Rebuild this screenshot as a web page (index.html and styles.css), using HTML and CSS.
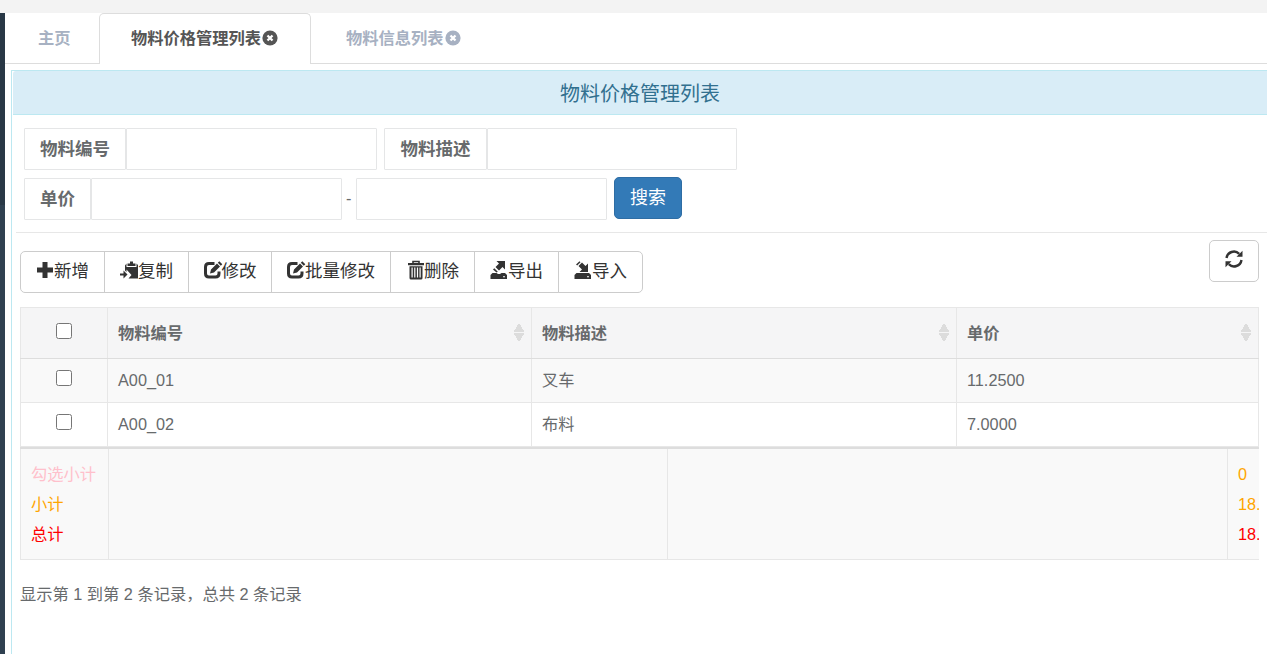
FILE: index.html
```html
<!DOCTYPE html>
<html lang="zh-CN">

<head>
    <meta charset="UTF-8" />
    <title>物料价格管理列表</title>
    <link rel="stylesheet" href="styles.css">
</head>

<body>
    <div class="topbar"></div>
    <div class="layout">
        <div class="sidebar"></div>
        <div class="main">
            <!-- Tabs -->
            <div class="tabs">
                <div class="tab home">主页</div>
                <div class="tab active">物料价格管理列表<svg class="close" viewBox="0 0 16 16"><circle cx="8" cy="8" r="7.600" fill="currentColor" /><path d="M5.500 5.500l5 5M10.500 5.500l-5 5" stroke="#fff" stroke-width="2.300" /></svg></div>
                <div class="tab">物料信息列表<svg class="close" viewBox="0 0 16 16"><circle cx="8" cy="8" r="7.600" fill="currentColor" /><path d="M5.500 5.500l5 5M10.500 5.500l-5 5" stroke="#fff" stroke-width="2.300" /></svg></div>
            </div>

            <div class="panel">
                <div class="panel-heading">物料价格管理列表</div>

                <!-- Search form -->
                <div class="search">
                    <div class="search-row">
                        <div class="group">
                            <label class="addon">物料编号</label>
                            <input class="field" type="text">
                        </div>
                        <div class="group">
                            <label class="addon addon-desc">物料描述</label>
                            <input class="field field-desc" type="text">
                        </div>
                    </div>
                    <div class="search-row">
                        <div class="group">
                            <label class="addon addon-price">单价</label>
                            <input class="field" type="text">
                        </div>
                        <span class="dash">-</span>
                        <input class="field" type="text">
                        <button class="btn-search">搜索</button>
                    </div>
                </div>

                <div class="content">
                    <!-- Toolbar -->
                    <div class="toolbar">
                        <div class="btn-group">
                            <button class="btn"><svg class="icon" viewBox="0 0 18 18"><path d="M6.500 1h5v5.500H17v5h-5.500V17h-5v-5.500H1v-5h5.500z" /></svg>新增</button>
                            <button class="btn"><svg class="icon" viewBox="0 0 18 18"><path d="M10 .5h3v2h2.500V5h-8V2.500H10zM5 4.500l1.500-2V6h10V2.500L18 4v13.500H8.500l3-3.500L6.500 8.500V11L5 9.500z" /><path d="M0 12.500h3.500V9.500l4 4-4 4V14.500H0z" /></svg>复制</button>
                            <button class="btn btn-edit"><svg class="icon" viewBox="0 0 18 18"><path d="M10.500 2.500H5Q1.500 2.500 1.500 6v6.500Q1.500 16 5 16h6.500q3.500 0 3.500-3.500V10.500" fill="none" stroke="#333" stroke-width="3" /><path d="M6 12.500l1-4L13 2.500l3 3-6 6zM13.800 1.700L15.300.3l3 3-1.500 1.400z" /></svg>修改</button>
                            <button class="btn btn-batch"><svg class="icon" viewBox="0 0 18 18"><path d="M10.500 2.500H5Q1.500 2.500 1.500 6v6.500Q1.500 16 5 16h6.500q3.500 0 3.500-3.500V10.500" fill="none" stroke="#333" stroke-width="3" /><path d="M6 12.500l1-4L13 2.500l3 3-6 6zM13.800 1.700L15.300.3l3 3-1.500 1.400z" /></svg>批量修改</button>
                            <button class="btn"><svg class="icon trash" viewBox="0 0 18 20"><path d="M6 3V1.500h6V3" fill="none" stroke="#333" stroke-width="1.600" /><path fill-rule="evenodd" d="M1 3h16v2.200H1zM2.500 6.200h13V18q0 1.500-1.500 1.500H4q-1.500 0-1.500-1.500zM4.500 7.500v10h1.200v-10zM7.200 7.500v10h1.200v-10zM9.900 7.500v10h1.200v-10zM12.500 7.500v10h1.200v-10z" /></svg>删除</button>
                            <button class="btn"><svg class="icon" viewBox="0 0 18 18"><path fill-rule="evenodd" d="M2.500 12h4l1.500 1h2l1.500-1H15l2 2v4H.5v-4zM13 15.300v1h2v-1z" /><path d="M6.500 0H15v8.500l-2.500-2.500L9 9.500 5.500 6 9 2.500z" /><path d="M4.300 7.200l3.500 3.500-1.300.8L3 8.500z" /></svg>导出</button>
                            <button class="btn"><svg class="icon" viewBox="0 0 18 18"><path fill-rule="evenodd" d="M2.500 12h12.500l2 2v4H.5v-4zM13 15.300v1h2v-1z" /><path d="M14 2.500V11H5.500L8 8.500 4.500 5 8 1.500 11.500 5z" /><path d="M2 3.500L5.500.3l1 1L3.200 4.600z" /></svg>导入</button>
                        </div>
                        <button class="btn btn-refresh"><svg class="icon" viewBox="0 0 18 18"><path d="M1.500 8a7.500 7.500 0 0 1 12.700-4.200M16.500 10a7.500 7.500 0 0 1-12.700 4.200" fill="none" stroke="#333" stroke-width="2.400" /><path d="M17.500.8v6h-6zM.5 17.200v-6h6z" /></svg></button>
                    </div>

                    <!-- Data table -->
                    <table class="table">
                        <thead>
                            <tr>
                                <th class="check"><input type="checkbox"></th>
                                <th class="col"><div class="th"><span>物料编号</span><span class="sort"></span></div></th>
                                <th class="col-desc"><div class="th"><span>物料描述</span><span class="sort"></span></div></th>
                                <th><div class="th"><span>单价</span><span class="sort"></span></div></th>
                            </tr>
                        </thead>
                        <tbody>
                            <tr>
                                <td class="check"><input type="checkbox"></td>
                                <td>A00_01</td>
                                <td class="desc">叉车</td>
                                <td>11.2500</td>
                            </tr>
                            <tr>
                                <td class="check"><input type="checkbox"></td>
                                <td>A00_02</td>
                                <td class="desc">布料</td>
                                <td>7.0000</td>
                            </tr>
                        </tbody>
                    </table>

                    <!-- Totals -->
                    <div class="totals">
                        <div class="sum sum-names">
                            <p class="pink">勾选小计</p>
                            <p class="orange">小计</p>
                            <p class="red">总计</p>
                        </div>
                        <div class="sum sum-wide"></div>
                        <div class="sum sum-last"></div>
                        <div class="sum sum-values">
                            <p class="orange">0</p>
                            <p class="orange">18.</p>
                            <p class="red">18.</p>
                        </div>
                    </div>

                    <div class="info">显示第 1 到第 2 条记录，总共 2 条记录</div>
                </div>
            </div>
        </div>
    </div>
</body>

</html>
```
FILE: styles.css
```css
* {
    box-sizing: border-box;
}

body {
    margin: 0;
    height: 654px;
    overflow: hidden;
    font-family: "Liberation Sans", "Noto Sans CJK SC", sans-serif;
    font-size: 16.25px;
    color: #676a6c;
    background-color: #fff;
}

button,
input {
    font-family: inherit;
    margin: 0;
}

.topbar {
    height: 13px;
    background-color: #f3f3f3;
}

.layout {
    display: flex;
    height: 641px;
}

.sidebar {
    width: 5px;
    background: linear-gradient(#293846 192px, #2f4050 192px);
}

.main {
    flex: 1;
    min-width: 0;
}

/* tabs */
.tabs {
    display: flex;
    height: 51px;
    border-bottom: 1px solid #ddd;
}

.tab {
    display: flex;
    align-items: center;
    height: 50px;
    padding: 0 0 2px 35px;
    font-weight: bold;
    color: #a7b1c2;
}

.tab.home {
    width: 94px;
    padding-left: 33px;
}

.tab.active {
    width: 212px;
    height: 51px;
    padding: 0 0 4px 31px;
    color: #555;
    background-color: #fff;
    border: 1px solid #ddd;
    border-bottom: none;
    border-radius: 5px 5px 0 0;
}

.close {
    width: 16px;
    height: 16px;
    margin: 1px 0 0 1px;
}

/* panel */
.panel {
    height: 584px;
    margin: 6px 0 0 6px;
    padding-left: 1px;
    border-top: 1px solid #bce8f1;
    border-left: 1px solid #bce8f1;
}

.panel-heading {
    height: 44px;
    padding-top: 2px;
    line-height: 43px;
    text-align: center;
    font-size: 20px;
    color: #31708f;
    background-color: #d9edf7;
    border-bottom: 1px solid #bce8f1;
    border-top-left-radius: 3px;
}

.search {
    display: flex;
    flex-direction: column;
    gap: 8px;
    height: 118px;
    margin-left: 3px;
    padding: 13px 0 0 8px;
    border-bottom: 1px solid #e7e7e7;
}

.search-row {
    display: flex;
    height: 42px;
    gap: 7px;
}

.group {
    display: flex;
}

.addon {
    width: 102px;
    height: 42px;
    line-height: 40px;
    text-align: center;
    font-size: 17.5px;
    font-weight: bold;
    border: 1px solid #e5e6e7;
    border-radius: 1px;
}

.addon-desc {
    width: 103px;
}

.addon-price {
    width: 67px;
}

.field {
    width: 251px;
    height: 42px;
    border: 1px solid #e5e6e7;
    border-radius: 1px;
}

.field-desc {
    width: 250px;
}

.dash {
    width: 6px;
    margin: 0 -3px;
    line-height: 41px;
}

.btn-search {
    width: 68px;
    height: 42px;
    margin-top: -1px;
    padding: 0 0 4px;
    font-size: 18px;
    color: #fff;
    background-color: #337ab7;
    border: 1px solid #2e6da4;
    border-radius: 5px;
}

/* toolbar */
.content {
    margin: 0 8px 0 7px;
}

.toolbar {
    display: flex;
    justify-content: space-between;
    height: 74px;
    padding-top: 7px;
}

.btn-group {
    display: flex;
    margin-top: 11px;
}

.btn {
    display: flex;
    align-items: center;
    justify-content: center;
    width: 85px;
    height: 42px;
    padding: 0 0 5px;
    font-size: 17.5px;
    color: #333;
    white-space: nowrap;
    background-color: #fff;
    border: 1px solid #ccc;
}

.btn + .btn {
    margin-left: -1px;
}

.btn-group .btn:first-child {
    border-radius: 5px 0 0 5px;
}

.btn-group .btn:last-child {
    border-radius: 0 5px 5px 0;
}

.btn-edit {
    width: 84px;
}

.btn-batch {
    width: 120px;
}

.btn-refresh {
    width: 50px;
    border-radius: 5px;
}

.icon {
    width: 18px;
    height: 18px;
    fill: #333;
    overflow: visible;
}

.trash {
    height: 20px;
    margin: 0 -1px 0 1px;
}

/* table */
.table {
    width: 1239px;
    table-layout: fixed;
    border-collapse: collapse;
}

.table th,
.table td {
    height: 44px;
    padding: 0 10px;
    text-align: left;
    border: 1px solid #e7e7e7;
}

.table th {
    height: 51px;
    padding-right: 6px;
    background-color: #f5f5f6;
    border-bottom-color: #ddd;
}

.table .desc {
    padding-bottom: 4px;
}

.table tbody tr:first-child {
    background-color: #f9f9f9;
}

.table .check {
    width: 87px;
    padding: 0;
    text-align: center;
}

.check input {
    display: block;
    width: 16px;
    height: 16px;
    margin: -5px auto 0;
}

.col {
    width: 424px;
}

.col-desc {
    width: 425px;
}

.th {
    display: flex;
    align-items: center;
    justify-content: space-between;
    margin-top: -3px;
}

.sort {
    width: 12px;
    height: 19px;
    margin-top: 2px;
    background:
        conic-gradient(from 149deg at 50% 0, #dcdcdc 62deg, transparent 0) top / 12px 9px no-repeat,
        conic-gradient(from -31deg at 50% 100%, #dcdcdc 62deg, transparent 0) bottom / 12px 9px no-repeat;
}

/* totals */
.totals {
    display: flex;
    width: 1239px;
    height: 113px;
    overflow: hidden;
    background-color: #f9f9f9;
    border-top: 2px solid #ddd;
    border-bottom: 1px solid #e7e7e7;
}

.sum {
    flex: none;
    padding: 10px 10px 0;
    border-left: 1px solid #e7e7e7;
}

.sum p {
    margin: 0;
    height: 30px;
    line-height: 30px;
}

.sum-names {
    width: 88px;
    white-space: nowrap;
}

.sum-wide {
    width: 559px;
}

.sum-last {
    width: 560px;
}

.sum-values {
    width: 32px;
    padding-right: 0;
}

.pink {
    color: pink;
}

.orange {
    color: orange;
}

.red {
    color: red;
}

.info {
    margin-top: 22px;
    line-height: 24px;
}
```
